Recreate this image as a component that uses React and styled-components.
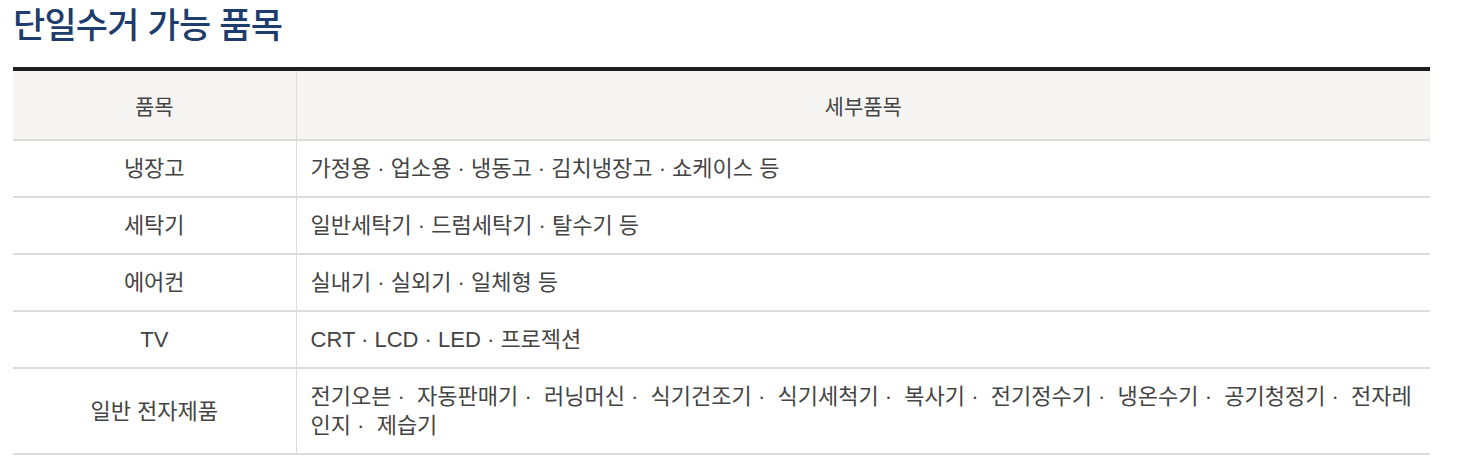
import React from 'react';
import styled, { createGlobalStyle } from 'styled-components';

const GlobalStyle = createGlobalStyle`
  html, body {
    margin: 0;
    padding: 0;
    background: #fff;
  }
  body {
    font-family: 'Liberation Sans', 'Noto Sans CJK KR', sans-serif;
  }
`;

const Page = styled.div`
  padding: 6px 30px 0 13px;
`;

const Title = styled.h2`
  margin: 0 0 21px 0;
  font-size: 35px;
  line-height: 40px;
  font-weight: 500;
  color: #1e3d6c;
  letter-spacing: -0.8px;
`;

const Table = styled.table`
  width: 1417px;
  border-collapse: collapse;
  border-top: 4px solid #1f1f1f;
  border-bottom: 2px solid #dcdcdc;
  table-layout: fixed;
  font-size: 22px;
  color: #444;
`;

const HeadCell = styled.th`
  height: 68px;
  padding: 0;
  background: #f6f5f3;
  font-size: 21px;
  font-weight: 400;
  text-align: center;
  border-bottom: 2px solid #dcdcdc;
  border-left: ${(props) => (props.divider ? '1px solid #dcdcdc' : 'none')};
`;

const Row = styled.tr`
  border-top: ${(props) => (props.first ? 'none' : '2px solid #dcdcdc')};
`;

const NameCell = styled.td`
  padding: 13px 10px;
  text-align: center;
  line-height: 29px;
  vertical-align: middle;
`;

const DetailCell = styled.td`
  padding: 13px 15px 13px 14px;
  line-height: 29px;
  border-left: 1px solid #dcdcdc;
`;

const rows = [
  { name: '냉장고', detail: '가정용 · 업소용 · 냉동고 · 김치냉장고 · 쇼케이스 등' },
  { name: '세탁기', detail: '일반세탁기 · 드럼세탁기 · 탈수기 등' },
  { name: '에어컨', detail: '실내기 · 실외기 · 일체형 등' },
  { name: 'TV', detail: 'CRT · LCD · LED · 프로젝션' },
  {
    name: '일반 전자제품',
    detail: [
      '전기오븐',
      '자동판매기',
      '러닝머신',
      '식기건조기',
      '식기세척기',
      '복사기',
      '전기정수기',
      '냉온수기',
      '공기청정기',
      '전자레인지',
      '제습기',
    ].join(' ·\u00a0 '),
  },
];

export default function App() {
  return (
    <>
      <GlobalStyle />
      <Page>
        <Title>단일수거 가능 품목</Title>
        <Table>
          <colgroup>
            <col style={{ width: '283px' }} />
            <col />
          </colgroup>
          <thead>
            <tr>
              <HeadCell>품목</HeadCell>
              <HeadCell divider>세부품목</HeadCell>
            </tr>
          </thead>
          <tbody>
            {rows.map((row, i) => (
              <Row key={row.name} first={i === 0}>
                <NameCell>{row.name}</NameCell>
                <DetailCell>{row.detail}</DetailCell>
              </Row>
            ))}
          </tbody>
        </Table>
      </Page>
    </>
  );
}
